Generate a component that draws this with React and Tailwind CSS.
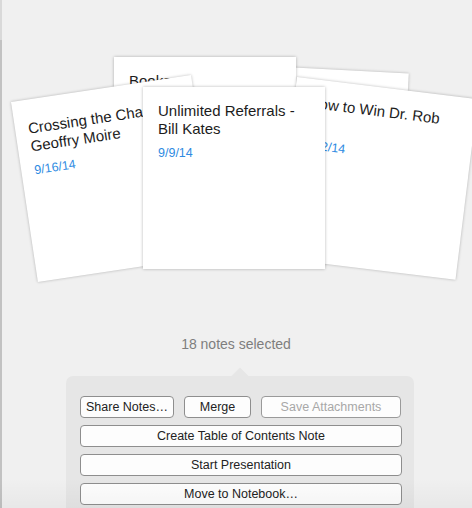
import React from "react";

function Card({ className, title, date, minTwo, pad = "px-[15px] pt-[15px]" }) {
  return (
    <div
      className={
        "absolute w-[182px] h-[182px] bg-white shadow-[0_0_3px_rgba(0,0,0,0.28)] origin-top-left " +
        pad +
        " " +
        className
      }
    >
      <div className={"text-[15px] leading-[18px] text-[#1c1c1c] " + (minTwo ? "min-h-[36px]" : "")}>
        {title}
      </div>
      {date && (
        <div className="mt-[8px] text-[12.5px] leading-[15px] text-[#2f8be2]">{date}</div>
      )}
    </div>
  );
}

function Btn({ children, className = "", disabled }) {
  return (
    <div
      className={
        "h-[22px] flex items-center justify-center bg-[#fdfdfd] border border-[#8e8e8e] rounded-[4px] text-[12.5px] leading-none " +
        (disabled ? "text-[#a8a8a8] border-[#9a9a9a] " : "text-[#222222] ") +
        className
      }
    >
      {children}
    </div>
  );
}

export default function App() {
  return (
    <div className="relative w-[472px] h-[508px] flex overflow-hidden bg-[#f0f0f0] font-['Liberation_Sans',Arial,sans-serif]">
      <div className="w-[2px] flex flex-col shrink-0">
        <div className="h-[40px] bg-[#d9d9d9]" />
        <div className="flex-1 bg-[#c2c2c2]" />
      </div>
      <div className="relative flex-1 flex flex-col">
        <div className="relative h-[336px] shrink-0">
          {/* back right card */}
          <Card className="left-[225px] top-[63.5px] rotate-[3deg]" title="" />
          {/* Books card */}
          <Card className="left-[112px] top-[57px] w-[180px]" title="Books" />
          {/* right rotated card */}
          <Card
            className="left-[295px] top-[77px] rotate-[7deg]"
            title="How to Win Dr. Rob"
            date="9/12/14"
            minTwo
          />
          {/* left rotated card */}
          <Card
            className="left-[9px] top-[102px] rotate-[-8.5deg]"
            pad="pl-[13px] pr-[15px] pt-[20px]"
            title={
              <>
                Crossing the Chasm -<br />Geoffry Moire
              </>
            }
            date="9/16/14"
          />
          {/* center card */}
          <Card
            className="left-[141px] top-[87px] h-[181px]"
            title={
              <>
                Unlimited Referrals -<br />Bill Kates
              </>
            }
            date="9/9/14"
          />
        </div>
        <div className="text-center text-[14px] leading-[17px] text-[#7e7e7e] ml-[-2px]">
          18 notes selected
        </div>
        <div className="relative mt-[23px] ml-[64px] w-[348px] flex-1 bg-[#e6e6e6] rounded-t-[7px] pl-[14px] pr-[12px] pt-[20px] flex flex-col gap-[7px]">
          <div className="absolute top-[-6px] left-[168px] w-[12px] h-[12px] bg-[#e6e6e6] rotate-45" />
          <div className="relative flex gap-[10px]">
            <Btn className="w-[94px]">Share Notes…</Btn>
            <Btn className="w-[67px]">Merge</Btn>
            <Btn className="flex-1 mr-[1px]" disabled>
              Save Attachments
            </Btn>
          </div>
          <Btn className="relative">Create Table of Contents Note</Btn>
          <Btn className="relative">Start Presentation</Btn>
          <Btn className="relative">Move to Notebook…</Btn>
        </div>
      </div>
      <div className="pointer-events-none absolute left-0 right-0 bottom-0 h-[30px] bg-gradient-to-b from-transparent to-[rgba(0,0,0,0.035)]" />
    </div>
  );
}
